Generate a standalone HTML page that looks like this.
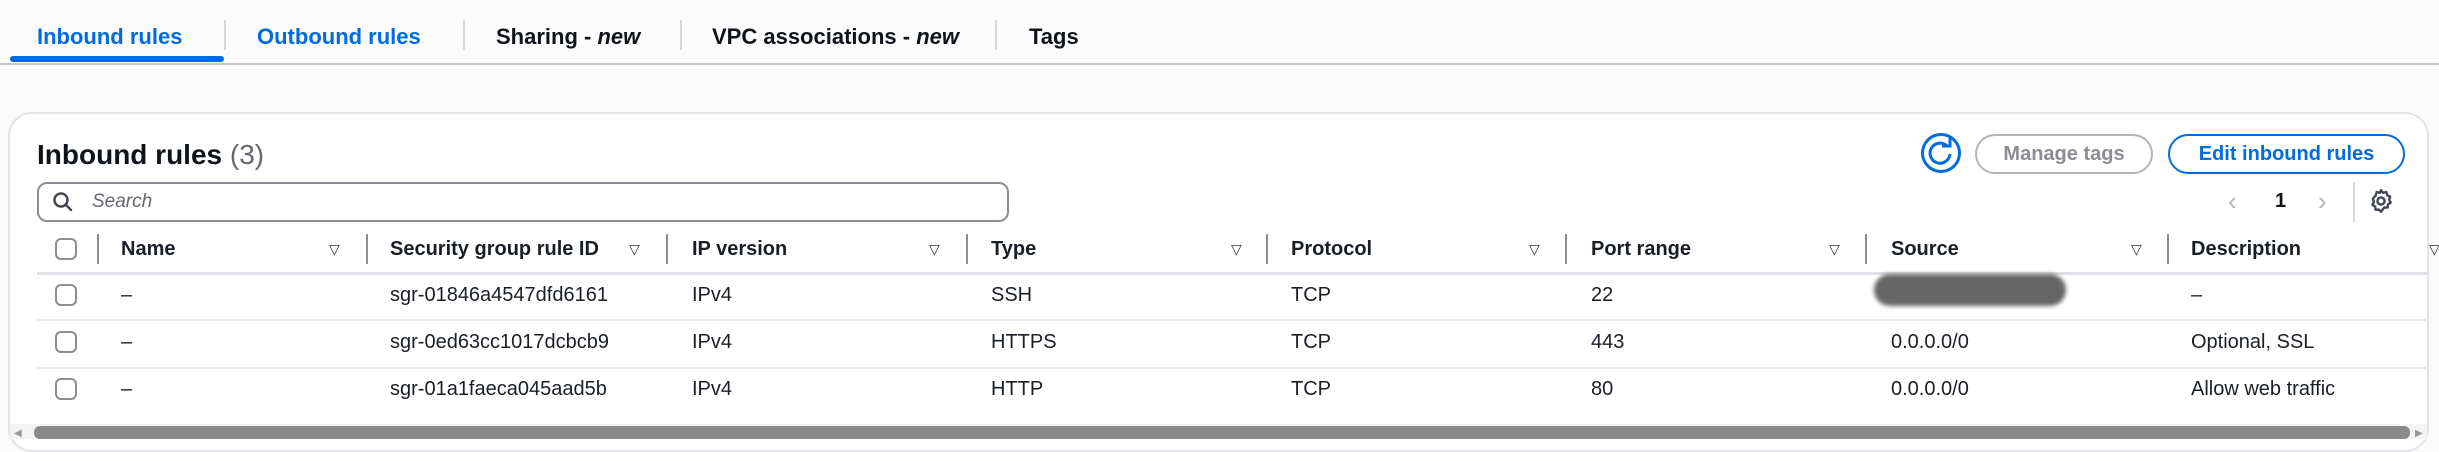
<!DOCTYPE html>
<html><head><style>
*{margin:0;padding:0;box-sizing:border-box}
body{width:2439px;height:439px;background:#fbfbfb;font-family:"Liberation Sans",sans-serif;color:#0f141a;position:relative;overflow:hidden}
.a{position:absolute;white-space:nowrap}
.tab{top:24px;font-size:22px;font-weight:bold}
.tsep{top:20px;width:2px;height:30px;background:#d8d8dc}
.hd{top:238px;font-size:20px;font-weight:bold;color:#1a1f26}
.tri{top:241px;font-size:14px;color:#333}
.csep{top:234px;width:2px;height:30px;background:#8c8c94}
.c{font-size:20px;color:#1a1f26}
.cb{left:55px;width:22px;height:22px;border:2px solid #8c8c94;border-radius:6px;background:#fff}
.rl{left:37px;width:2392px;height:2px;background:#ebebf0}
</style></head><body>
<div class="a tab" style="left:37px;color:#006ce0">Inbound rules</div>
<div class="a" style="left:10px;top:56px;width:214px;height:6px;background:#006ce0;border-radius:3px"></div>
<div class="a tsep" style="left:224px"></div>
<div class="a tab" style="left:257px;color:#006ce0">Outbound rules</div>
<div class="a tsep" style="left:463px"></div>
<div class="a tab" style="left:496px">Sharing - <i>new</i></div>
<div class="a tsep" style="left:680px"></div>
<div class="a tab" style="left:712px">VPC associations - <i>new</i></div>
<div class="a tsep" style="left:995px"></div>
<div class="a tab" style="left:1029px">Tags</div>
<div class="a" style="left:0;top:63px;width:2439px;height:2px;background:#c6c6cd"></div>

<div class="a" style="left:8px;top:112px;width:2421px;height:340px;background:#fff;border:2px solid #e3e3e8;border-radius:24px"></div>
<div class="a" style="left:37px;top:139px;font-size:28px;font-weight:bold">Inbound rules <span style="font-weight:normal;color:#656871">(3)</span></div>
<div class="a" style="left:37px;top:182px;width:972px;height:40px;border:2px solid #8c8c94;border-radius:10px;background:#fff"></div>
<svg class="a" style="left:52px;top:191px" width="22" height="22" viewBox="0 0 22 22"><circle cx="9" cy="9" r="6.5" fill="none" stroke="#424650" stroke-width="2.4"/><path d="M14 14l5 5" stroke="#424650" stroke-width="2.4" stroke-linecap="round"/></svg>
<div class="a" style="left:92px;top:191px;font-size:19px;font-style:italic;color:#656871">Search</div>

<svg class="a" style="left:1920px;top:132px" width="42" height="42" viewBox="0 0 42 42"><circle cx="21" cy="21" r="18.5" fill="none" stroke="#006ce0" stroke-width="3"/><path d="M27 14a10 10 0 1 0 3 8" fill="none" stroke="#006ce0" stroke-width="3"/><path d="M22 14h8v-8" fill="none" stroke="#006ce0" stroke-width="3"/></svg>
<div class="a" style="left:1975px;top:134px;width:178px;height:40px;border:2px solid #b4b4bb;border-radius:20px;color:#8c8c94;font-size:20px;font-weight:bold;text-align:center;line-height:36px">Manage tags</div>
<div class="a" style="left:2168px;top:134px;width:237px;height:40px;border:2px solid #006ce0;border-radius:20px;color:#006ce0;font-size:20px;font-weight:bold;text-align:center;line-height:36px">Edit inbound rules</div>

<div class="a" style="left:2228px;top:186px;font-size:26px;color:#b4b4bb">&#8249;</div>
<div class="a" style="left:2275px;top:190px;font-size:20px;font-weight:bold">1</div>
<div class="a" style="left:2318px;top:186px;font-size:26px;color:#b4b4bb">&#8250;</div>
<div class="a" style="left:2353px;top:182px;width:2px;height:40px;background:#d8d8dc"></div>
<svg class="a" style="left:2368px;top:188px" width="26" height="26" viewBox="0 0 24 24"><path d="M12 2l2 2.5 3-.8.8 3 2.7 1.3-1 2.9 1.5 2.6-2.6 1.6-.3 3-3.1-.1L12 22l-2-2.1-3 .2-.4-3-2.6-1.6 1.5-2.6-1-2.9L7.2 6.7 8 3.7l3 .8z" fill="none" stroke="#424650" stroke-width="2.2" stroke-linejoin="round"/><circle cx="12" cy="12" r="3.3" fill="none" stroke="#424650" stroke-width="2.2"/></svg>

<div class="a cb" style="top:238px"></div>
<div class="a csep" style="left:97px"></div>
<div class="a hd" style="left:121px">Name</div><div class="a tri" style="left:329px">&#9661;</div><div class="a csep" style="left:366px"></div>
<div class="a hd" style="left:390px">Security group rule ID</div><div class="a tri" style="left:629px">&#9661;</div><div class="a csep" style="left:666px"></div>
<div class="a hd" style="left:692px">IP version</div><div class="a tri" style="left:929px">&#9661;</div><div class="a csep" style="left:966px"></div>
<div class="a hd" style="left:991px">Type</div><div class="a tri" style="left:1231px">&#9661;</div><div class="a csep" style="left:1266px"></div>
<div class="a hd" style="left:1291px">Protocol</div><div class="a tri" style="left:1529px">&#9661;</div><div class="a csep" style="left:1565px"></div>
<div class="a hd" style="left:1591px">Port range</div><div class="a tri" style="left:1829px">&#9661;</div><div class="a csep" style="left:1865px"></div>
<div class="a hd" style="left:1891px">Source</div><div class="a tri" style="left:2131px">&#9661;</div><div class="a csep" style="left:2167px"></div>
<div class="a hd" style="left:2191px">Description</div><div class="a tri" style="left:2429px">&#9661;</div>
<div class="a" style="left:37px;top:272px;width:2392px;height:3px;background:#e0e0e6"></div>

<div class="a cb" style="top:284px"></div>
<div class="a c" style="left:121px;top:284px">–</div>
<div class="a c" style="left:390px;top:284px">sgr-01846a4547dfd6161</div>
<div class="a c" style="left:692px;top:284px">IPv4</div>
<div class="a c" style="left:991px;top:284px">SSH</div>
<div class="a c" style="left:1291px;top:284px">TCP</div>
<div class="a c" style="left:1591px;top:284px">22</div>
<div class="a" style="left:1874px;top:274px;width:192px;height:32px;background:#666;border-radius:16px;filter:blur(2px)"></div>
<div class="a c" style="left:2191px;top:284px">–</div>
<div class="a rl" style="top:319px"></div>

<div class="a cb" style="top:331px"></div>
<div class="a c" style="left:121px;top:331px">–</div>
<div class="a c" style="left:390px;top:331px">sgr-0ed63cc1017dcbcb9</div>
<div class="a c" style="left:692px;top:331px">IPv4</div>
<div class="a c" style="left:991px;top:331px">HTTPS</div>
<div class="a c" style="left:1291px;top:331px">TCP</div>
<div class="a c" style="left:1591px;top:331px">443</div>
<div class="a c" style="left:1891px;top:331px">0.0.0.0/0</div>
<div class="a c" style="left:2191px;top:331px">Optional, SSL</div>
<div class="a rl" style="top:367px"></div>

<div class="a cb" style="top:378px"></div>
<div class="a c" style="left:121px;top:378px">–</div>
<div class="a c" style="left:390px;top:378px">sgr-01a1faeca045aad5b</div>
<div class="a c" style="left:692px;top:378px">IPv4</div>
<div class="a c" style="left:991px;top:378px">HTTP</div>
<div class="a c" style="left:1291px;top:378px">TCP</div>
<div class="a c" style="left:1591px;top:378px">80</div>
<div class="a c" style="left:1891px;top:378px">0.0.0.0/0</div>
<div class="a c" style="left:2191px;top:378px">Allow web traffic</div>

<div class="a" style="left:10px;top:424px;width:2417px;height:15px;background:#f4f4f4"></div>
<div class="a" style="left:14px;top:428px;font-size:10px;color:#999">&#9664;</div>
<div class="a" style="left:34px;top:426px;width:2376px;height:13px;background:#8a8a8a;border-radius:6px"></div>
<div class="a" style="left:2415px;top:428px;font-size:10px;color:#999">&#9654;</div>
</body></html>
